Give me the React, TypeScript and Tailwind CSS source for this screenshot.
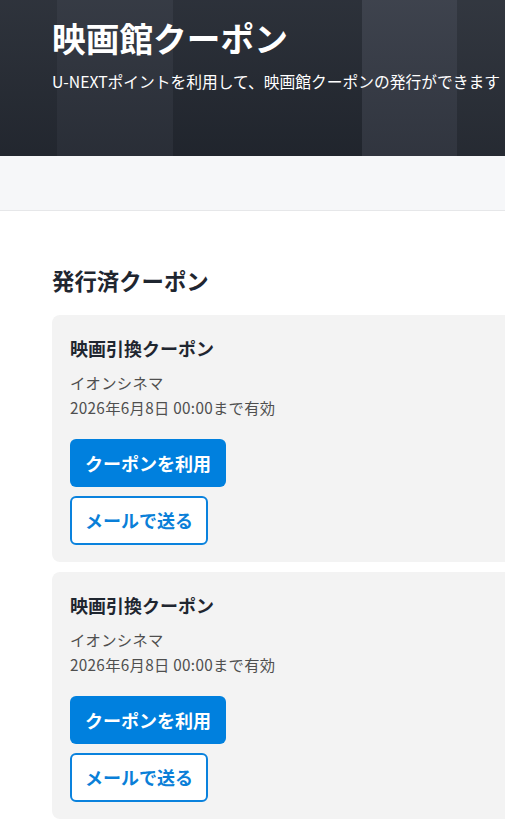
import React from "react";

const coupons = [
  { title: "映画引換クーポン", theater: "イオンシネマ", expires: "2026年6月8日 00:00まで有効" },
  { title: "映画引換クーポン", theater: "イオンシネマ", expires: "2026年6月8日 00:00まで有効" },
];

function CouponCard(props: { title: string; theater: string; expires: string }) {
  return (
    <div className="w-[620px] rounded-lg bg-[#f3f3f3] pl-[18px] pt-[20px] pb-[17px]">
      {/* Title */}
      <div className="text-[18px] leading-[27px] font-bold text-[#1f2630]">{props.title}</div>

      {/* Details */}
      <div className="mt-2 text-[15.3px] leading-[25px] tracking-[0.3px] text-[#4f4f4f]">
        <p>{props.theater}</p>
        <p>{props.expires}</p>
      </div>

      {/* Actions */}
      <div className="mt-[19px] flex flex-col items-start gap-[9px]">
        <button className="h-[48px] rounded-md bg-[#0080de] px-[15px] text-[18px] font-bold text-white">
          クーポンを利用
        </button>
        <button className="h-[49px] rounded-md border-2 border-[#0a82dd] bg-white px-[13px] text-[18px] font-bold text-[#0a7fd8]">
          メールで送る
        </button>
      </div>
    </div>
  );
}

export default function App() {
  return (
    <div className="h-screen w-full overflow-hidden bg-white font-['Noto_Sans_CJK_JP','Noto_Sans',sans-serif]">
      {/* Hero */}
      <div className="relative h-[156px] w-full bg-[linear-gradient(90deg,#262b34_0px,#262b34_57px,#2e333d_57px,#2e333d_173px,#242932_173px,#242932_362px,#363b46_362px,#363b46_457px,#2a2f38_457px)]">
        <div className="absolute inset-0 bg-[linear-gradient(180deg,rgba(255,255,255,0.04),rgba(0,0,0,0.1))]" />
        <div className="relative pl-[52px] pt-[15px] whitespace-nowrap">
          <h1 className="text-[33.7px] leading-[45px] font-bold text-white">映画館クーポン</h1>
          <p className="mt-[10px] text-[15.75px] leading-[24px] text-white">
            U-NEXTポイントを利用して、映画館クーポンの発行ができます
          </p>
        </div>
      </div>

      {/* Sub bar */}
      <div className="h-[55px] border-b border-[#e6e7e9] bg-[#f6f7f9]" />

      {/* Issued coupons */}
      <div className="pl-[52px] pt-[53px]">
        <h2 className="mb-[18px] text-[22.4px] leading-[33px] font-bold text-[#1f2630]">発行済クーポン</h2>
        <div className="flex flex-col gap-[10px]">
          {coupons.map((c, i) => (
            <CouponCard key={i} {...c} />
          ))}
        </div>
      </div>
    </div>
  );
}
